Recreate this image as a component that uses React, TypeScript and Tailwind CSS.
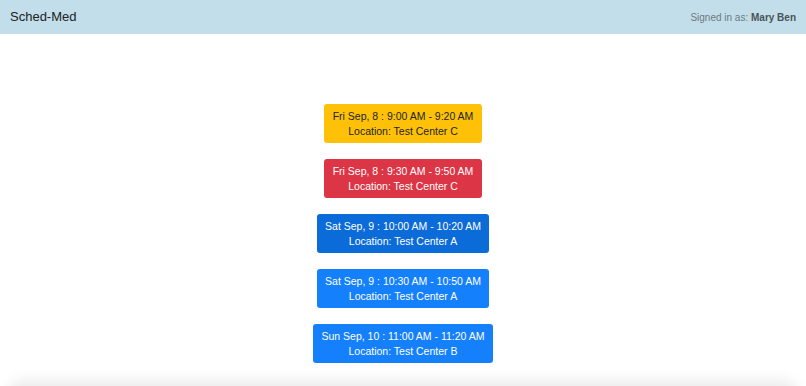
const slots = [
  { day: "Fri Sep, 8", time: "9:00 AM - 9:20 AM", loc: "Test Center C", cls: "bg-[#ffc107] text-[#212529]" },
  { day: "Fri Sep, 8", time: "9:30 AM - 9:50 AM", loc: "Test Center C", cls: "bg-[#dc3545] text-white" },
  { day: "Sat Sep, 9", time: "10:00 AM - 10:20 AM", loc: "Test Center A", cls: "bg-[#0b6bd8] text-white" },
  { day: "Sat Sep, 9", time: "10:30 AM - 10:50 AM", loc: "Test Center A", cls: "bg-[#1580fb] text-white" },
  { day: "Sun Sep, 10", time: "11:00 AM - 11:20 AM", loc: "Test Center B", cls: "bg-[#1580fb] text-white" },
];

export default function App() {
  return (
    <div className="min-h-[386px] w-full bg-white font-['Liberation_Sans',Arial,sans-serif] overflow-hidden relative">
      <header className="h-[34px] flex items-center justify-between px-[10px] bg-[#c1deea]">
        <span className="text-[13px] text-[#222]">Sched-Med</span>
        <span className="text-[10px] text-[#6f7a80]">
          Signed in as: <span className="font-bold text-[#4a5358]">Mary Ben</span>
        </span>
      </header>
      <main className="flex flex-col items-center gap-4 pt-[70px]">
        {slots.map((s, i) => (
          <button
            key={i}
            className={`${s.cls} rounded-[3px] px-[8.5px] py-[4.5px] text-[10.5px] leading-[15px] text-center`}
          >
            <div>
              {s.day} : {s.time}
            </div>
            <div>Location: {s.loc}</div>
          </button>
        ))}
      </main>
      <div className="absolute left-[8px] right-[8px] top-[386px] h-[30px] rounded-[20px] bg-white shadow-[0_-6px_14px_rgba(0,0,0,0.08)]" />
    </div>
  );
}
